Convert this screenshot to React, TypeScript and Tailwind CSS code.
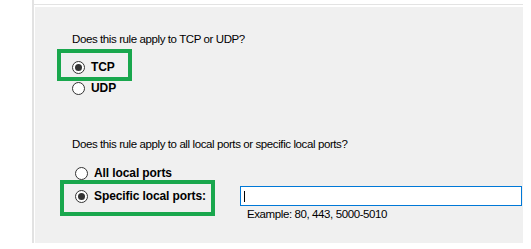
import React from 'react';

const Radio = ({ checked }: { checked?: boolean }) => (
  <span className="flex h-[13px] w-[13px] shrink-0 items-center justify-center rounded-full border border-[#333333] bg-white">
    {checked && <span className="h-[7px] w-[7px] rounded-full bg-[#333333]" />}
  </span>
)

const Option = ({ label, checked }: { label: string; checked?: boolean }) => (
  <div className="flex h-[13px] items-center gap-[6px]">
    <Radio checked={checked} />
    <span className="text-[12px] font-bold leading-[13px] tracking-[-0.1px] text-black">{label}</span>
  </div>
)

export default function App() {
  return (
    <div
      className="flex h-[249px] w-[531px] bg-white"
      style={{ fontFamily: '"Liberation Sans", Arial, sans-serif' }}
    >
      {/* left edge */}
      <div className="w-[32px] shrink-0" />
      <div className="h-[243px] w-[2px] shrink-0 bg-[#e2e2e2]" />

      <div className="flex w-[489px] flex-col">
        <div className="h-[4px] bg-white" />
        <div className="h-[1px] bg-[#e3e3e3]" />
        <div className="h-[2px] bg-white" />

        {/* wizard page */}
        <div className="relative ml-[1px] h-[236px] bg-[#f0f0f0] pl-[37px] text-[11.5px] leading-[13px] tracking-[-0.4px] text-black">
          <p className="mt-[26px]">Does this rule apply to TCP or UDP?</p>

          <div className="mt-[15px] flex flex-col gap-[8px]">
            <Option label="TCP" checked />
            <Option label="UDP" />
          </div>

          <p className="mt-[43px]">Does this rule apply to all local ports or specific local ports?</p>

          <div className="ml-[3px] mt-[16px]">
            <Option label="All local ports" />
            <div className="mt-[6px] flex h-[20px] items-center">
              <div className="w-[165px]">
                <Option label="Specific local ports:" checked />
              </div>
              <div className="flex h-[20px] w-[282px] items-center border border-[#0078d7] bg-white pl-[3px]">
                <span className="h-[11px] w-[1px] bg-black" />
              </div>
            </div>
            <p className="ml-[172px] mt-[2px]">Example: 80, 443, 5000-5010</p>
          </div>

          {/* highlight boxes */}
          <div className="absolute left-[22px] top-[42px] h-[32px] w-[75px] border-4 border-[#19a74d]" />
          <div className="absolute left-[25px] top-[173px] h-[36px] w-[155px] border-4 border-[#19a74d]" />
        </div>
      </div>
    </div>
  )
}
